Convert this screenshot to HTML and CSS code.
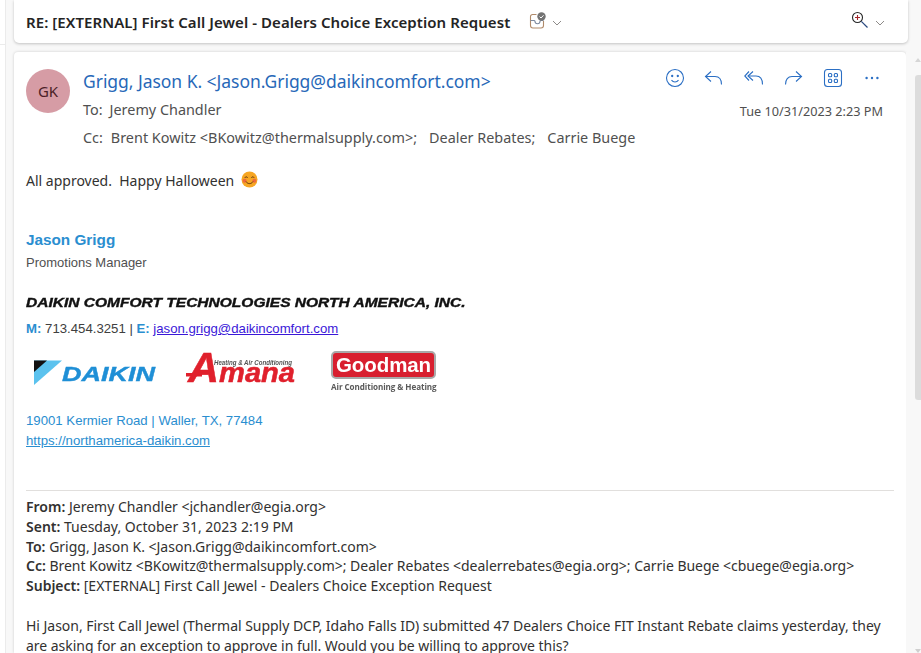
FILE: index.html
```html
<!DOCTYPE html>
<html lang="en">
<head>
<meta charset="utf-8">
<title>RE: [EXTERNAL] First Call Jewel - Dealers Choice Exception Request</title>
<link rel="stylesheet" href="styles.css">
</head>
<body>
<div class="app">
  <div class="gutter"><div class="gutter-strip"><div class="gutter-top"></div></div></div>
  <main class="pane">
    <header class="subject-card">
      <h1 class="subject">RE: [EXTERNAL] First Call Jewel - Dealers Choice Exception Request</h1>
      <svg class="ic-status" width="18" height="18" viewBox="0 0 18 18" fill="none">
        <path d="M7.5 2.5H3.5a2 2 0 0 0-2 2v9a2.500 2.500 0 0 0 2.500 2.500h8a2.500 2.500 0 0 0 2.500-2.500V9" stroke="#b08a6a" stroke-width="1.100"/>
        <path d="M1.500 8.500h3.500a1 1 0 0 1 1 .8 2.500 2.500 0 0 0 5 0 1 1 0 0 1 1-.8h2.500" stroke="#7d8aa0" stroke-width="1.100"/>
        <circle cx="12.500" cy="4.500" r="4.200" fill="#737373"/>
        <path d="M10.600 4.600l1.400 1.400 2.500-2.700" stroke="#fff" stroke-width="1"/>
      </svg>
      <svg class="chev chev-status" width="10" height="6" viewBox="0 0 10 6" fill="none"><path d="M1 1l4 4 4-4" stroke="#8d8a88"/></svg>
      <div class="spacer"></div>
      <svg class="ic-zoom" width="18" height="18" viewBox="0 0 18 18" fill="none">
        <circle cx="6.500" cy="6.500" r="5" stroke="#262626" stroke-width="1.100"/>
        <path d="M4 6.500h5M6.500 4v5" stroke="#a4262c" stroke-width="1.100"/>
        <path d="M10.300 10.300l6.200 6.200" stroke="#2b4a80" stroke-width="1.200"/>
      </svg>
      <svg class="chev chev-zoom" width="10" height="6" viewBox="0 0 10 6" fill="none"><path d="M1 1l4 4 4-4" stroke="#8d8a88"/></svg>
    </header>
    <div class="lower">
      <article class="message">
        <section class="head">
          <div class="avatar">GK</div>
          <div class="head-main">
            <div class="sender">Grigg, Jason K. &lt;Jason.Grigg@daikincomfort.com&gt;</div>
            <div class="recipients row-to"><span class="label">To:</span>Jeremy Chandler</div>
            <div class="recipients row-cc"><span class="label">Cc:</span>Brent Kowitz &lt;BKowitz@thermalsupply.com&gt;;<span class="rgap">Dealer Rebates;</span><span class="rgap">Carrie Buege</span></div>
          </div>
          <div class="head-side">
            <div class="actions">
              <svg width="20" height="20" viewBox="0 0 20 20" fill="none" stroke="#2b6fc4" stroke-width="1.100"><circle cx="10" cy="10" r="8.500"/><circle cx="7.200" cy="8" r=".6" fill="#2b6fc4"/><circle cx="12.800" cy="8" r=".6" fill="#2b6fc4"/><path d="M6.500 12.200c1.800 2.300 5.200 2.300 7 0"/></svg>
              <svg width="20" height="20" viewBox="0 0 20 20" fill="none" stroke="#2b6fc4" stroke-width="1.100"><path d="M7 3.500L1.500 8.500 7 13.500"/><path d="M1.500 8.500h9.500c4 0 6.500 3 6.500 8"/></svg>
              <svg width="20" height="20" viewBox="0 0 20 20" fill="none" stroke="#2b6fc4" stroke-width="1.100"><path d="M5 3.500L.8 8 5 12.500"/><path d="M9 3.500L4 8l5 4.500"/><path d="M4 8h8c4 0 6.500 3 6.500 8.500"/></svg>
              <svg width="20" height="20" viewBox="0 0 20 20" fill="none" stroke="#2b6fc4" stroke-width="1.100"><path d="M13 3.500l5.500 5-5.500 5"/><path d="M18.500 8.500H9c-4 0-6.500 3-6.500 8"/></svg>
              <svg width="20" height="20" viewBox="0 0 20 20" fill="none" stroke="#2b6fc4" stroke-width="1.100"><rect x="1.500" y="1.500" width="17" height="17" rx="3"/><rect x="5.500" y="5.500" width="3.200" height="3.200" rx="1"/><rect x="11.300" y="5.500" width="3.200" height="3.200" rx="1"/><rect x="5.500" y="11.300" width="3.200" height="3.200" rx="1"/><rect x="11.300" y="11.300" width="3.200" height="3.200" rx="1"/></svg>
              <svg width="20" height="20" viewBox="0 0 20 20" fill="#2b6fc4"><circle cx="4.600" cy="10" r="1.200"/><circle cx="10" cy="10" r="1.200"/><circle cx="15.400" cy="10" r="1.200"/></svg>
            </div>
            <div class="date">Tue 10/31/2023 2:23 PM</div>
          </div>
        </section>

        <p class="greeting">All approved.&nbsp; Happy Halloween
          <svg class="emoji" width="17" height="17" viewBox="0 0 17 17"><circle cx="8.500" cy="8.500" r="8" fill="#f6a623"/><circle cx="3.600" cy="9.800" r="2" fill="#ef6a3c"/><circle cx="13.400" cy="9.800" r="2" fill="#ef6a3c"/><path d="M3.800 6.800c.8-1.300 2-1.300 2.800 0M10.400 6.800c.8-1.300 2-1.300 2.800 0" fill="none" stroke="#5b3210"/><path d="M5 10.500c1.600 2.800 5.400 2.800 7 0" fill="none" stroke="#5b3210"/></svg>
        </p>

        <section class="signature">
          <div class="sig-name">Jason Grigg</div>
          <div class="sig-role">Promotions Manager</div>
          <div class="sig-company">DAIKIN COMFORT TECHNOLOGIES NORTH AMERICA, INC.</div>
          <div class="sig-contact"><b>M:</b> 713.454.3251 | <b>E:</b> <a class="link-mail" href="#">jason.grigg@daikincomfort.com</a></div>
          <div class="logos">
            <svg class="logo-daikin" width="122" height="26" viewBox="0 0 122 26">
              <path d="M0 .5H28L0 25z" fill="#5bc2ee"/>
              <path d="M0 .5H13L0 12z" fill="#111"/>
              <text x="28" y="20.500" class="daikin-text" textLength="93" lengthAdjust="spacingAndGlyphs">DAIKIN</text>
            </svg>
            <svg class="logo-amana" width="112" height="34" viewBox="0 0 112 34">
              <rect x="0" y="21" width="16" height="3.500" fill="#e0202c"/>
              <text x="28" y="13" class="amana-sub" textLength="78" lengthAdjust="spacingAndGlyphs">Heating &amp; Air Conditioning</text>
              <text x="2" y="29.500" class="amana-text"><tspan class="amana-a">A</tspan><tspan class="amana-rest" textLength="76" lengthAdjust="spacingAndGlyphs">mana</tspan></text>
            </svg>
            <div class="logo-goodman">
              <div class="gm-badge"><span class="gm-word">Goodman</span></div>
              <div class="gm-sub">Air Conditioning &amp; Heating</div>
            </div>
          </div>
          <div class="sig-address">19001 Kermier Road | Waller, TX, 77484</div>
          <a class="sig-web" href="#">https://northamerica-daikin.com</a>
        </section>

        <hr class="rule">

        <section class="quoted">
          <div><b>From:</b> Jeremy Chandler &lt;jchandler@egia.org&gt;</div>
          <div><b>Sent:</b> Tuesday, October 31, 2023 2:19 PM</div>
          <div><b>To:</b> Grigg, Jason K. &lt;Jason.Grigg@daikincomfort.com&gt;</div>
          <div class="quoted-cc"><b>Cc:</b> Brent Kowitz &lt;BKowitz@thermalsupply.com&gt;; Dealer Rebates &lt;dealerrebates@egia.org&gt;; Carrie Buege &lt;cbuege@egia.org&gt;</div>
          <div><b>Subject:</b> [EXTERNAL] First Call Jewel - Dealers Choice Exception Request</div>
          <p class="quoted-body">Hi Jason, First Call Jewel (Thermal Supply DCP, Idaho Falls ID) submitted 47 Dealers Choice FIT Instant Rebate claims yesterday, they are asking for an exception to approve in full. Would you be willing to approve this?</p>
        </section>
      </article>
      <aside class="scrollbar">
        <div class="arrow-up"></div>
        <div class="thumb"></div>
        <div class="arrow-down"></div>
      </aside>
    </div>
  </main>
</div>
</body>
</html>
```
FILE: styles.css
```css
* { box-sizing: border-box; }
html, body { margin: 0; height: 100%; overflow: hidden; background: #f8f8f8; }
body { font-family: "Noto Sans", sans-serif; color: #323130; }

.app { display: flex; height: 653px; width: 921px; }
.gutter { width: 14px; flex: none; }
.gutter-strip { width: 6px; height: 100%; background: #fff; border-right: 1px solid #ebebeb; }
.gutter-top { height: 45px; border-bottom: 1px solid #ebebeb; }
.pane { flex: 1; min-width: 0; display: flex; flex-direction: column; }

.subject-card {
  height: 43px; flex: none; width: 894px; display: flex; align-items: center;
  padding: 0 23px 0 12px; background: #fff; border-radius: 0 0 5px 5px;
  box-shadow: 0 1px 3px rgba(0,0,0,.22);
}
.subject { margin: 0; font: 600 15px/20px "Noto Sans", sans-serif; color: #242424; letter-spacing: .07px; white-space: nowrap; }
.ic-status { margin-left: 19px; margin-top: -2px; }
.chev-status { margin-left: 5px; margin-top: 2px; }
.spacer { flex: 1; }
.ic-zoom { margin-top: -3px; }
.chev-zoom { margin-left: 6px; margin-top: 2px; }

.lower { flex: 1; min-height: 0; display: flex; margin-top: 9px; }
.message {
  width: 892px; flex: none; background: #fff; padding: 17px 12px 0; border-radius: 4px 4px 0 0;
  box-shadow: 0 0 3px rgba(0,0,0,.18); overflow: hidden;
}

.head { display: flex; }
.avatar {
  width: 44px; height: 44px; border-radius: 50%; background: #d69ca5; color: #4c1f28;
  display: flex; align-items: center; justify-content: center; font: 400 15px/1 "Noto Sans", sans-serif; flex: none;
}
.head-main { margin-left: 13px; flex: 1; min-width: 0; }
.sender { font: 400 17.500px/24px "Noto Sans", sans-serif; color: #2768b8; letter-spacing: -.04px; }
.recipients { font: 400 14.400px/20px "Noto Sans", sans-serif; color: #505050; white-space: nowrap; }
.row-to { margin-top: 7px; }
.row-cc { margin-top: 8px; }
.label { margin-right: 7px; }
.row-cc .label { margin-right: 8px; }
.rgap { margin-left: 12px; }
.head-side { display: flex; flex-direction: column; align-items: flex-end; padding-right: 11px; }
.actions { display: flex; gap: 19.500px; margin-right: 1px; margin-top: -1px; }
.date { font: 400 12.700px/16px "Noto Sans", sans-serif; color: #505050; margin-top: 15px; }

.greeting { margin: 23px 0 0; font: 400 14px/20px "Noto Sans", sans-serif; color: #323130; display: flex; align-items: center; gap: 7px; }
.emoji { margin-top: -3px; }

.signature { margin-top: 40px; font-family: "Liberation Sans", Arial, sans-serif; font-size: 13.200px; color: #404040; }
.sig-name { font-size: 15.300px; line-height: 18px; font-weight: 700; color: #2a8ed0; }
.sig-role { margin-top: 7px; line-height: 14px; color: #505050; font-size: 13px; }
.sig-company {
  margin-top: 26px; font: italic 700 13.500px/14px "Liberation Sans", sans-serif; color: #111;
  transform: scaleX(1.150); transform-origin: left center; white-space: nowrap; -webkit-text-stroke: .4px #111; filter: blur(.3px);
}
.sig-contact { margin-top: 12px; line-height: 14px; }
.sig-contact b { color: #2a8ed0; }
.link-mail { color: #3a18d8; }
.logos { display: flex; align-items: flex-start; margin-top: 13px; height: 51px; filter: blur(.35px); }
.logo-daikin { margin: 11px 0 0 8px; flex: none; }
.logo-amana { margin: 3px 0 0 30px; flex: none; overflow: visible; }
.daikin-text { font: italic 700 21px "Liberation Sans", sans-serif; fill: #1f8fd6; stroke: #1f8fd6; stroke-width: .4px; }
.amana-sub { font: italic 700 6.300px "Liberation Sans", sans-serif; fill: #555; }
.amana-text { font: italic 700 27px "Liberation Sans", sans-serif; fill: #e0202c; stroke: #e0202c; stroke-width: .5px; }
.amana-a { font-size: 43px; }
.logo-goodman { margin: 2px 0 0 33px; width: 105px; flex: none; }
.gm-badge { height: 28px; border: 2px solid #a9a9a9; border-radius: 5px; background: #d81f2f; display: flex; align-items: center; justify-content: center; }
.gm-word { font: 700 20.500px/1 "Liberation Sans", sans-serif; color: #fff; letter-spacing: -.1px; }
.gm-sub { margin-top: 3px; font: 700 8.100px/10px "Open Sans", sans-serif; color: #5a5a5a; white-space: nowrap; letter-spacing: -.08px; }
.sig-address { margin-top: 12px; line-height: 18px; color: #2a8ed0; }
.sig-web { display: block; margin-top: 2px; line-height: 18px; color: #2a8ed0; width: max-content; }

.rule { margin: 40px 0 0; border: 0; border-top: 1px solid #e1dfdd; }

.quoted { margin-top: 6px; font: 400 14px/19.800px "Noto Sans", sans-serif; color: #323130; }
.quoted b { font-weight: 600; }
.quoted-cc { letter-spacing: -.02px; }
.quoted-body { margin: 20px 0 0; width: 866px; letter-spacing: -.03px; }

.scrollbar { flex: 1; background: #f8f8f8; display: flex; flex-direction: column; align-items: flex-end; }
.arrow-up { width: 0; height: 0; margin: 6px 0 13px; border: 3.500px solid transparent; border-top: 0; border-bottom: 4px solid #d6d6d6; }
.thumb { width: 6px; height: 325px; background: #dcdcdc; border-radius: 3px 0 0 3px; }
.arrow-down { width: 0; height: 0; margin-top: auto; border: 3.500px solid transparent; border-bottom: 0; border-top: 4px solid #cfcfcf; }
```
